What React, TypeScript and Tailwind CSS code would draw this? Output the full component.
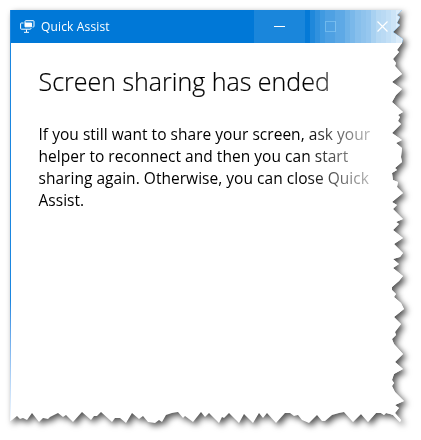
import React from "react";

// Outline of the torn sheet, in window coordinates (origin at the window's corner).
const right = "392,0 387,5 390,7 387,13 390,15 383,22 393,29 392,33 387,40 389,42 383,49 386,53 385,56 392,64 382,72 392,79 386,85 382,92 393,102 388,105 390,107 388,111 391,114 382,123 392,130 386,133 392,138 391,147 392,152 385,158 387,160 382,163 383,170 388,172 387,177 393,183 382,192 387,195 383,199 393,209 386,212 389,214 383,220 393,228 384,234 393,243 390,247 383,249 389,254 383,258 393,266 389,271 382,277 382,280 386,284 384,287 391,293 394,299 384,307 391,314 385,322 386,325 382,329 384,334 393,344 385,352 393,359 384,364 382,370 384,373 382,376 385,382 394,391 385,395 389,398 385,403 391,410 390,412 383,405";
const bottom = "380,404 376,403 374,405 371,403 366,403 358,412 351,404 343,412 334,402 329,403 322,405 315,411 312,411 307,405 299,413 292,410 288,405 284,406 280,403 275,403 266,413 257,403 253,408 249,403 243,413 234,404 229,413 219,403 214,408 212,407 209,413 199,403 195,407 191,402 187,407 183,412 175,406 173,408 168,402 162,403 156,405 152,412 149,410 145,413 138,412 133,406 129,409 122,403 116,413 110,408 105,408 102,412 91,402 87,406 84,406 81,410 72,402 63,412 56,405 53,407 48,403 40,407 38,409 33,408 29,412 22,403 17,410 13,408 10,409 7,406 2,410 0,411";
const outline = `polygon(0px 0px,${`${right} ${bottom}`.split(" ").map((p) => p.replace(",", "px ") + "px").join(",")})`;

// The title bar fades in narrow vertical bands.
const bands = [0.02, 0.12, 0.19, 0.25, 0.3, 0.31, 0.36, 0.37, 0.43, 0.48, 0.53, 0.56, 0.59, 0.66, 0.71, 0.73, 0.76, 0.8, 0.86, 0.9];

const AssistIcon = () => (
  <svg width="15" height="14" viewBox="0 0 15 14" fill="none" stroke="#fff" className="shrink-0">
    <path d="M5 3V1.5Q5 .7 5.8.7H13.2Q14 .7 14 1.5V6.3Q14 7 13.2 7H12.5" />
    <path d="M3.5 3H1.4Q.6 3 .6 3.8V8.4Q.6 9.2 1.4 9.2H10.2Q11 9.2 11 8.4V8" />
    <path d="M5 3H11.5V6.8H5Z" fill="#fff" />
    <path d="M6.5 9.5V12M4 12.3H9" />
  </svg>
);

export default function App() {
  return (
    <div className="h-[440px] w-[421px] overflow-hidden bg-white pt-[10px] pl-[10px] font-['Open_Sans','Noto_Sans',sans-serif]">
      <div className="drop-shadow-[3px_3px_3px_rgba(0,0,0,0.68)]">
        <div className="relative h-[415px] w-[396px] bg-white" style={{ clipPath: outline }}>
          <header className="relative flex h-[33px] items-center bg-[#0078d7] pl-[10px] text-white">
            <AssistIcon />
            <span className="ml-[6px] text-[12px] tracking-[0.15px] whitespace-nowrap">Quick Assist</span>
            <div className="ml-auto flex h-full w-[152px] shrink-0">
              <div className="flex w-[51px] items-center justify-center bg-[#1a86db]"><span className="h-px w-[11px] bg-white" /></div>
              <div className="flex w-[51px] items-center justify-center"><span className="size-[11px] border border-[#339be6]" /></div>
              <div className="flex w-[50px] items-center justify-center pl-[2px]">
                <svg width="11" height="11" viewBox="0 0 11 11" stroke="#fff" strokeWidth="1.2"><path d="M.5.5 10.5 10.5M10.5.5.5 10.5" /></svg>
              </div>
            </div>
            <div className="absolute inset-y-0 right-0 flex w-[101px]">
              {bands.map((opacity, i) => (
                <span key={i} className="h-full flex-1 bg-white" style={{ opacity }} />
              ))}
            </div>
          </header>
          <main className="relative h-[382px] pl-[28.5px] pt-[19px] text-black">
            <h1 className="text-[25px] leading-[38px] font-light whitespace-nowrap [-webkit-text-stroke:0.2px_black]">Screen sharing has ended</h1>
            <p className="mt-[23px] text-[15.5px] leading-[22px] tracking-[0.03px] whitespace-nowrap">
              If you still want to share your screen, ask your<br />
              helper to reconnect and then you can start<br />
              sharing again. Otherwise, you can close Quick<br />
              Assist.
            </p>
            <div className="absolute inset-y-0 right-0 w-[101px] bg-linear-to-r from-transparent to-white to-90%" />
          </main>
          <div className="absolute inset-y-0 left-0 w-px bg-linear-to-b from-[#1a86e0] from-70% to-white" />
        </div>
      </div>
    </div>
  );
}
